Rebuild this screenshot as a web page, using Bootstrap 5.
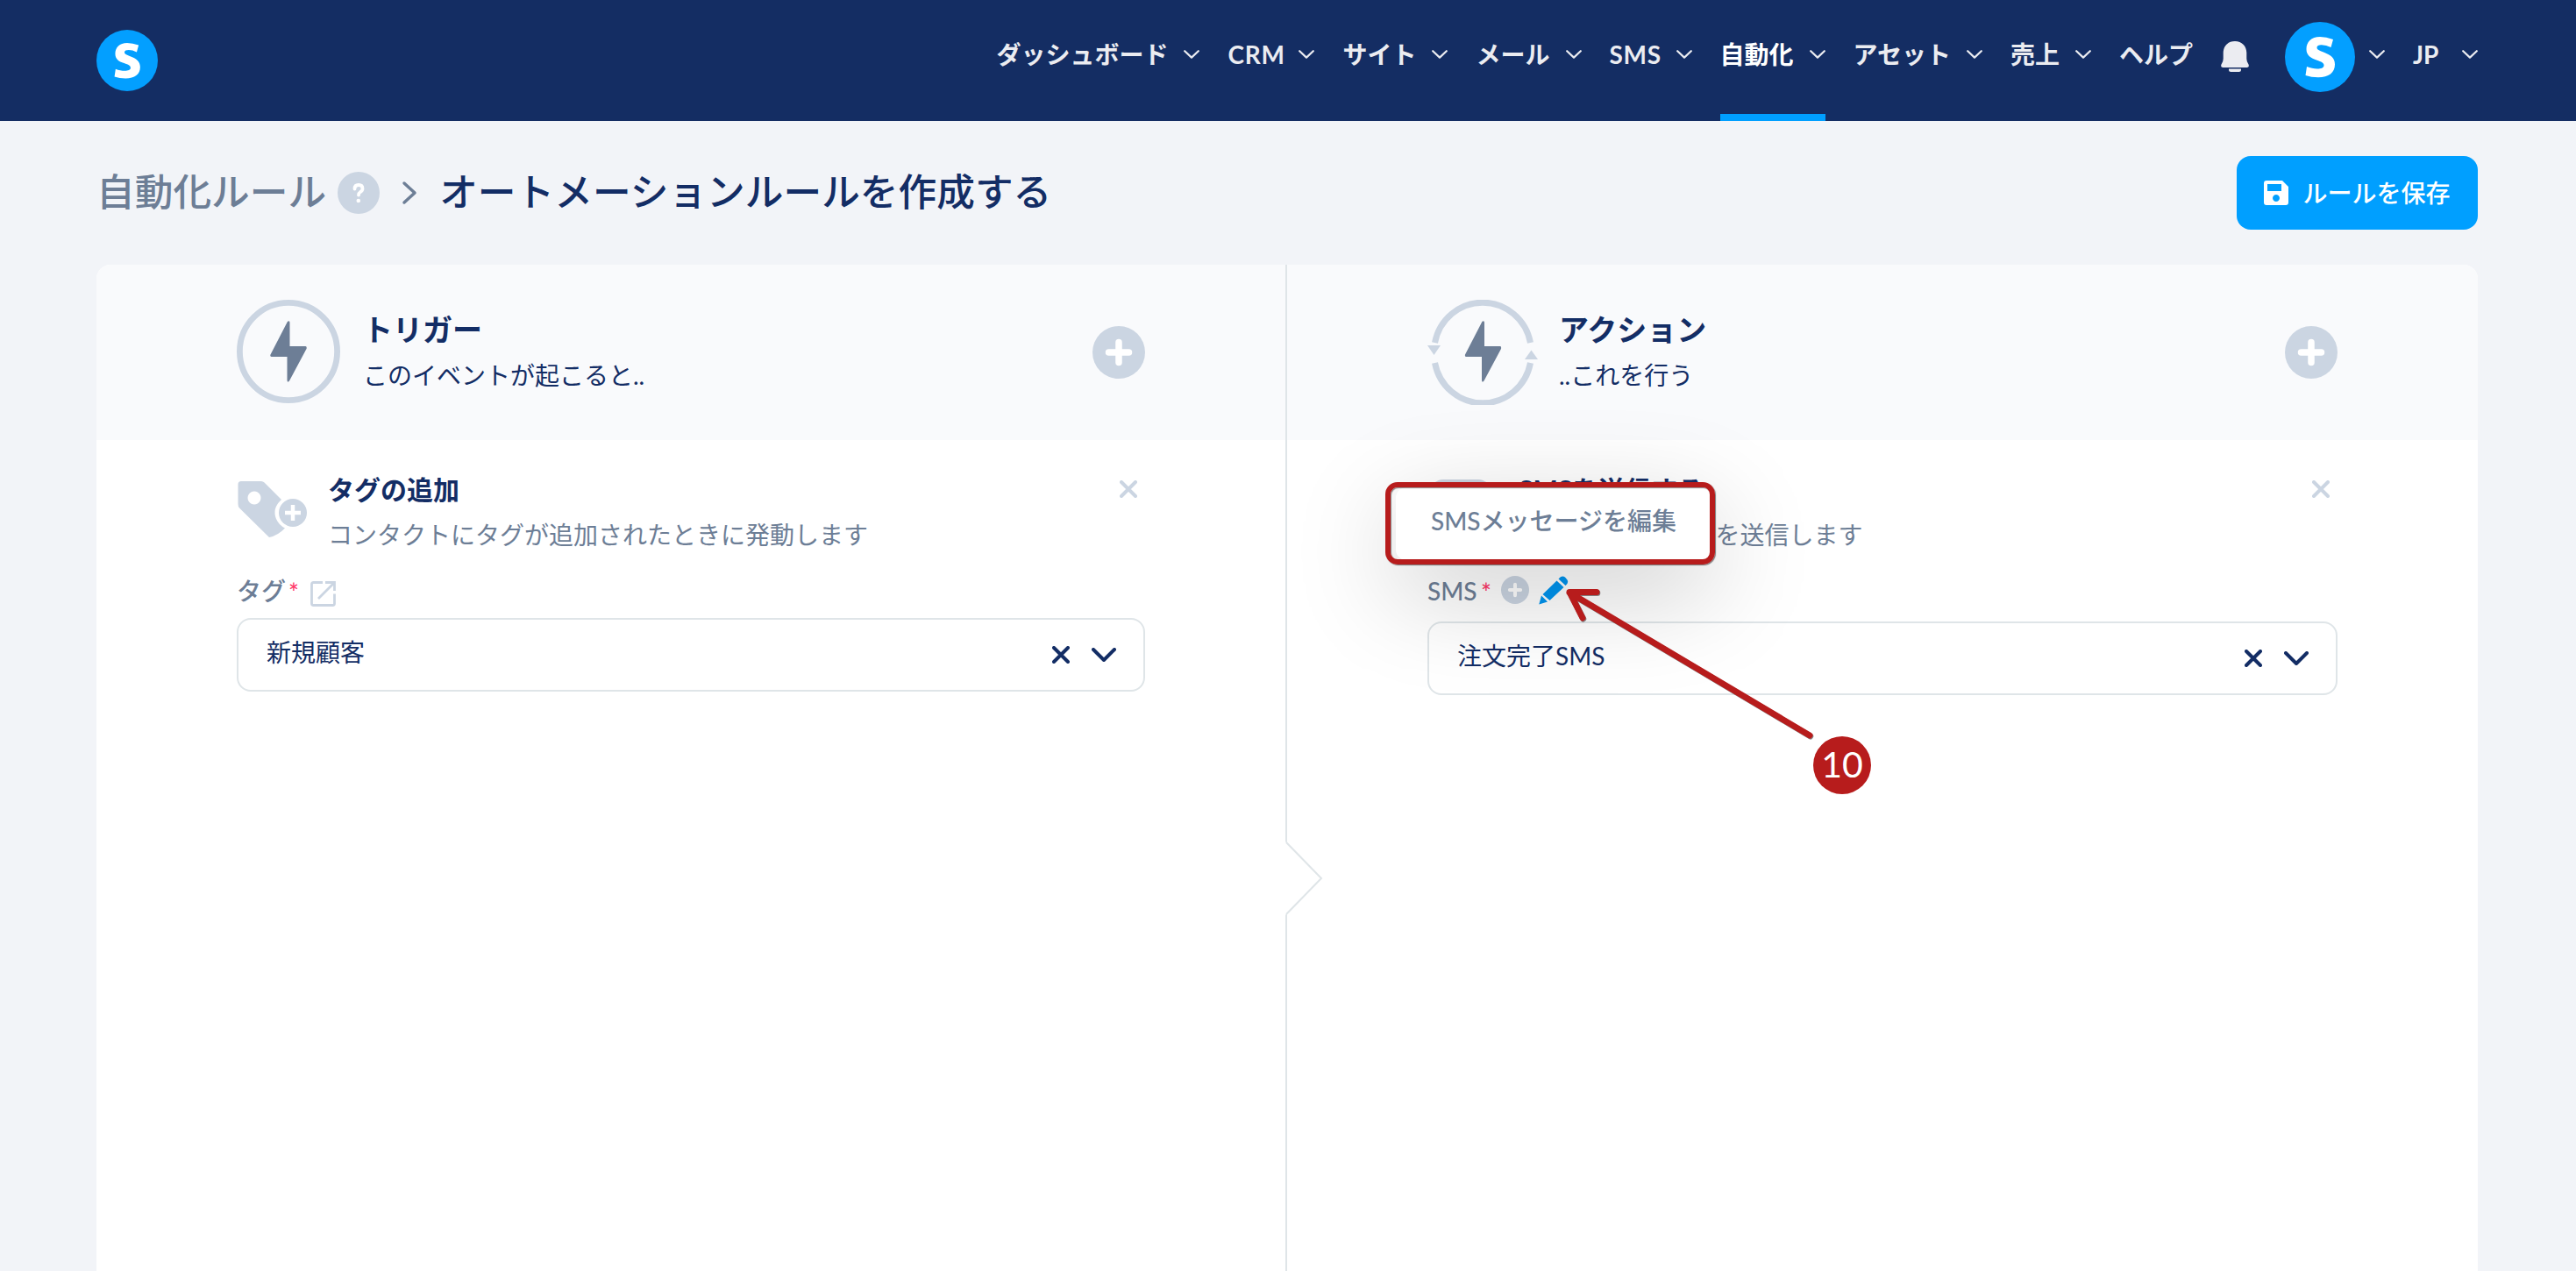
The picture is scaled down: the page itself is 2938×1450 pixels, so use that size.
<!DOCTYPE html>
<html lang="ja">
<head>
<meta charset="utf-8">
<title>オートメーションルールを作成する</title>
<link href="https://cdn.jsdelivr.net/npm/bootstrap@5.3.0/dist/css/bootstrap.min.css" rel="stylesheet">
<style>
body{background:#f2f4f8;color:#132d65;font-family:Lato,"Noto Sans CJK JP",sans-serif;font-size:28px;line-height:40px;height:1450px;overflow:hidden;position:relative}
svg{display:block;flex:none}
.topbar{background:#142d63;height:138px;padding:0 112px 0 110px}
.topbar .nav-link{padding:0 0 14px;color:#ebecf1;font-weight:700;height:138px;gap:18px;white-space:nowrap}
.topbar .nav-link.active{color:#fff;box-shadow:inset 0 -8px #009fff}
.menu{gap:32px}
.w-crm{width:63px;letter-spacing:.7px}
.w-sms{width:58px}
.topbar .w-sms{letter-spacing:.7px}
.w-jp{width:38px}
.avatar{margin:0 16px 8px 41px}
.ttl{font-size:43.700px;font-weight:500;line-height:64px;white-space:nowrap;padding-bottom:4px}
.slate{color:#6d7e96}
.headrow{padding:0 112px 0 110px;height:164px}
.help{margin-left:13px}
.crumb{margin:0 25px 0 25px}
.btn-save{background:#009fff;color:#fff;border:0;border-radius:16px;width:275px;height:84px;font-size:28px;font-weight:500;gap:16px;padding:0}
.board{margin:0 112px 0 110px;height:1148px;background:#fff;border-radius:16px 16px 0 0;overflow:hidden}
.pane{flex:0 0 1356px}
.pane-b{flex:1 1 0;border-left:2px solid #dfe5e8}
.pane-head{background:#f9fafc;height:200px;padding:0 160px}
.pane-ico{margin-bottom:2px}
.pane-body{padding:0 160px}
.pane-txt{padding:0 0 7px 26px}
.pane-b .pane-txt{padding-left:24px}
.h-a{font-size:34px;font-weight:700;line-height:40px;margin-bottom:18px}
.h-b{font-size:30px;font-weight:700;line-height:40px;margin:-2px 0 12px}
.rule-top{height:154px;padding-top:38px}
.rm{color:#cbd5e2;margin:8px 9px 0 0}
.lbl{height:49px;line-height:36px}
.pane-b .lbl{height:53px}
.ast{color:#ff3767;font-size:28px;line-height:38px;margin-left:3px}
.ext{margin:7px 0 0 13px}
.add-sms{margin:1px 0 0 11px}
.edit-sms{margin:1px 0 0 11px}
.sel{height:84px;border:2px solid #dfe5e8;border-radius:16px;padding:0 31px 0 32px}
.sel span{padding-bottom:6px}
.sel .clr{margin-right:25px}
.canvas-art{position:absolute;left:0;top:0;pointer-events:none}
.tip{position:absolute;left:1592px;top:556px;width:359px;height:83px;background:#fff;border-radius:12px;box-shadow:0 32px 120px rgba(0,0,0,.23);font-weight:500;padding:0 0 7px 40px;white-space:nowrap}
.hilite{position:absolute;left:1580px;top:550px;width:376px;height:94px;border:6px solid #b71c1c;border-radius:14px;box-shadow:1px 1px 1px rgba(0,0,0,.5),inset 1px 1px 1px rgba(0,0,0,.45)}
.step-no{position:absolute;left:2068px;top:840px;width:66px;height:66px;background:#b71c1c;color:#fff;font-size:41px;border-radius:50%;padding-bottom:2px}
</style>
<script src="https://cdn.jsdelivr.net/npm/bootstrap@5.3.0/dist/js/bootstrap.bundle.min.js"></script>
</head>
<body>
<svg width="0" height="0" class="position-absolute"><defs>
<symbol id="cv" viewBox="0 0 18 10"><path d="M1.200 1.200 9 8.600l7.800-7.400" fill="none" stroke="#ebecf1" stroke-width="2.200" stroke-linecap="round" stroke-linejoin="round"/></symbol>
<symbol id="cvb" viewBox="0 0 28 16"><path d="M2 2l12 12L26 2" fill="none" stroke="#132d65" stroke-width="4" stroke-linecap="round" stroke-linejoin="round"/></symbol>
<symbol id="xx" viewBox="0 0 20 20"><path d="M2 2l16 16M18 2L2 18" fill="none" stroke="currentColor" stroke-width="4" stroke-linecap="round"/></symbol>
<symbol id="plus" viewBox="0 0 60 60"><circle cx="30" cy="30" r="30" fill="#cbd5e2"/><path d="M30 18.500v23M18.500 30h23" stroke="#fff" stroke-width="7.500" stroke-linecap="round"/></symbol>
<symbol id="bolt" viewBox="0 0 42 70"><path d="M20 .8Q22.500-.8 22.500 2V29H40.500Q42.300 29.500 41.500 32L22 68.500Q20 71 19.500 68V41H1.500Q-.3 40.500.5 38.500Z" fill="#6d7e96"/></symbol>
<symbol id="brand" viewBox="0 0 80 80"><circle cx="40" cy="40" r="40" fill="#039fff"/><path d="M55 20Q47 17 40 17C30 17 24.500 23 24.500 31 24.500 38 29 41 36 43.500 42 45.500 44.500 47 44.500 49.500 44.500 52.500 41 53.500 37 53.500 33 53.500 29 52.500 25 51L23.500 61Q30 63.300 38 63.300C50 63.300 57 58 57 48.500 57 41 52 37.500 44 34.500 39 32.800 36.500 31.500 36.500 29.500 36.500 27 39 26.300 42 26.300Q47 26.300 52.500 29Z" fill="#fff"/></symbol>
</defs></svg>

<nav class="topbar d-flex align-items-center justify-content-between">
  <a href="#" aria-label="ホーム"><svg width="70" height="70"><use href="#brand"/></svg></a>
  <div class="d-flex align-items-center">
    <div class="menu nav d-flex flex-nowrap">
      <a class="nav-link d-flex align-items-center" href="#"><span>ダッシュボード</span><svg width="18" height="10"><use href="#cv"/></svg></a>
      <a class="nav-link d-flex align-items-center" href="#"><span class="w-crm">CRM</span><svg width="18" height="10"><use href="#cv"/></svg></a>
      <a class="nav-link d-flex align-items-center" href="#"><span>サイト</span><svg width="18" height="10"><use href="#cv"/></svg></a>
      <a class="nav-link d-flex align-items-center" href="#"><span>メール</span><svg width="18" height="10"><use href="#cv"/></svg></a>
      <a class="nav-link d-flex align-items-center" href="#"><span class="w-sms">SMS</span><svg width="18" height="10"><use href="#cv"/></svg></a>
      <a class="nav-link active d-flex align-items-center" href="#"><span>自動化</span><svg width="18" height="10"><use href="#cv"/></svg></a>
      <a class="nav-link d-flex align-items-center" href="#"><span>アセット</span><svg width="18" height="10"><use href="#cv"/></svg></a>
      <a class="nav-link d-flex align-items-center" href="#"><span>売上</span><svg width="18" height="10"><use href="#cv"/></svg></a>
      <a class="nav-link d-flex align-items-center" href="#">ヘルプ</a>
      <a class="nav-link d-flex align-items-center pb-2" href="#" aria-label="通知"><svg width="32" height="36" viewBox="0 0 32 36"><path d="M16 0C24 0 29 5.500 29.300 13V20Q29.300 22.500 31 25.500C32.800 28.500 31.500 30 29.500 30H2.500C.5 30-.8 28.500 1 25.500Q2.700 22.500 2.700 20V13C3 5.500 8 0 16 0ZM9 31.500h14v1q0 2.500-2.500 2.500h-9Q9 35 9 32.500Z" fill="#ebecf1"/></svg></a>
    </div>
    <a href="#" class="d-flex avatar" aria-label="アカウント"><svg width="80" height="80"><use href="#brand"/></svg></a>
    <div class="nav flex-nowrap menu">
      <a class="nav-link d-flex align-items-center" href="#" aria-label="メニュー"><svg width="18" height="10"><use href="#cv"/></svg></a>
      <a class="nav-link d-flex align-items-center" href="#"><span class="w-jp">JP</span><svg width="18" height="10"><use href="#cv"/></svg></a>
    </div>
  </div>
</nav>

<header class="headrow d-flex align-items-center justify-content-between">
  <div class="d-flex align-items-center">
    <span class="ttl slate">自動化ルール</span>
    <svg class="help" width="48" height="48" viewBox="0 0 48 48"><circle cx="24" cy="24" r="24" fill="#cbd5e2"/><path d="M19.500 19.500q0-4.500 4.500-4.500t4.500 4.200q0 2.300-2.500 3.800-2 1.300-2 3.500" fill="none" stroke="#fff" stroke-width="3.800" stroke-linecap="round"/><circle cx="23.800" cy="33" r="2.300" fill="#fff"/></svg>
    <svg class="crumb" width="18" height="28" viewBox="0 0 18 28"><path d="M3 3l12 11L3 25" fill="none" stroke="#6d7e96" stroke-width="3.500" stroke-linecap="round" stroke-linejoin="round"/></svg>
    <h1 class="ttl m-0">オートメーションルールを作成する</h1>
  </div>
  <button class="btn btn-save d-flex align-items-center justify-content-center"><svg width="28" height="28" viewBox="0 0 28 28"><path fill-rule="evenodd" d="M3 0H21L28 7V25q0 3-3 3H3q-3 0-3-3V3Q0 0 3 0ZM4 4V12H20V4ZM14 16a4 4 0 1 0 .01 0Z" fill="#fff"/></svg>ルールを保存</button>
</header>

<main class="board d-flex">
  <section class="pane">
    <div class="pane-head d-flex align-items-center">
      <svg class="pane-ico" width="118" height="118" viewBox="0 0 118 118"><circle cx="59" cy="59" r="55.600" fill="none" stroke="#cbd5e2" stroke-width="6.800"/><use href="#bolt" x="38" y="24" width="42" height="70"/></svg>
      <div class="flex-grow-1 pane-txt"><h2 class="h-a">トリガー</h2><div class="lh-1">このイベントが起こると..</div></div>
      <svg width="60" height="60"><use href="#plus"/></svg>
    </div>
    <div class="pane-body">
      <div class="rule-top d-flex">
        <svg class="mt-2" width="80" height="70" viewBox="0 0 80 70"><path fill-rule="evenodd" d="M5 1H28Q30 1 31.500 2.500L51 22Q40 32 45 44Q48 51 55 54.500Q47 63 37 65L3 31.500Q1.500 30 1.500 27V4.500Q1.500 1 5 1ZM20 12.500a7.500 7.500 0 1 0 .01 0Z" fill="#cbd5e2"/><circle cx="64" cy="37" r="16" fill="#cbd5e2"/><path d="M64 28v18M55 37h18" stroke="#fff" stroke-width="4.500"/></svg>
        <div class="flex-grow-1 ms-4"><h3 class="h-b">タグの追加</h3><div class="slate">コンタクトにタグが追加されたときに発動します</div></div>
        <svg class="rm" width="20" height="20"><use href="#xx"/></svg>
      </div>
      <label class="lbl d-flex slate fw-medium"><span>タグ</span><span class="ast">*</span>
        <svg class="ext" width="29" height="29" viewBox="0 0 29 29"><path d="M14 1.500H3.500Q1.500 1.500 1.500 3.500V25.500Q1.500 27.500 3.500 27.500H25.500Q27.500 27.500 27.500 25.500V14.500M17 1.500H27.500V11M27 2L9 20" fill="none" stroke="#cbd5e2" stroke-width="2.800"/></svg></label>
      <div class="sel d-flex align-items-center"><span class="flex-grow-1">新規顧客</span><svg class="clr" width="20" height="20"><use href="#xx"/></svg><svg width="28" height="16"><use href="#cvb"/></svg></div>
    </div>
  </section>
  <section class="pane-b">
    <div class="pane-head d-flex align-items-center">
      <svg width="126" height="120" viewBox="0 0 126 120"><path d="M8.500 49A55.500 56.500 0 0 1 117.500 49M117.500 72A55.500 56.500 0 0 1 8.500 72" fill="none" stroke="#cbd5e2" stroke-width="7"/><path d="M0 52H15L7.500 63ZM111 68H126L118.500 57.500Z" fill="#cbd5e2"/><use href="#bolt" x="42.500" y="24" width="42" height="70"/></svg>
      <div class="flex-grow-1 pane-txt"><h2 class="h-a">アクション</h2><div class="lh-1">..これを行う</div></div>
      <svg width="60" height="60"><use href="#plus"/></svg>
    </div>
    <div class="pane-body">
      <div class="rule-top d-flex">
        <svg width="80" height="70" viewBox="0 0 80 70"><rect x="4" y="7" width="68" height="56" rx="14" fill="#cbd5e2"/></svg>
        <div class="flex-grow-1 ms-4"><h3 class="h-b">SMSを送信する</h3><div class="slate">コンタクトにSMSを送信します</div></div>
        <svg class="rm" width="20" height="20"><use href="#xx"/></svg>
      </div>
      <div class="lbl d-flex slate fw-medium"><span class="w-sms">SMS</span><span class="ast">*</span>
        <svg class="add-sms" width="32" height="32"><use href="#plus"/></svg>
        <svg class="edit-sms" width="34" height="34" viewBox="0 0 34 34"><path d="M22.500 3.500Q26-1 30 1.500L32.500 4.500Q34.500 8 30.500 11ZM20.500 5.500L28.500 13L12.500 28L4.500 21ZM3 22.500L10 29.500L.3 32.500Z" fill="#0095f0"/></svg>
      </div>
      <div class="sel d-flex align-items-center"><span class="flex-grow-1">注文完了SMS</span><svg class="clr" width="20" height="20"><use href="#xx"/></svg><svg width="28" height="16"><use href="#cvb"/></svg></div>
    </div>
  </section>
</main>

<svg class="canvas-art" width="2938" height="1450" viewBox="0 0 2938 1450">
  <path d="M1464 960.500H1466.500L1507 1002L1466.500 1043.500H1464Z" fill="#fff"/><path d="M1467 961L1507 1002L1467 1043" fill="none" stroke="#dfe5e8" stroke-width="2"/>
</svg>
<div class="tip d-flex align-items-center slate">SMSメッセージを編集</div>
<div class="hilite"></div>
<svg class="canvas-art" width="2938" height="1450" viewBox="0 0 2938 1450">
  <path d="M2064 839L1790 676M1821 675.500L1790 675.500L1805 705" fill="none" stroke="rgba(0,0,0,.45)" stroke-width="7" stroke-linecap="round" stroke-linejoin="round" transform="translate(.8 1)"/>
  <path d="M2064 839L1790 676M1821 675.500L1790 675.500L1805 705" fill="none" stroke="#b71c1c" stroke-width="7" stroke-linecap="round" stroke-linejoin="round"/>
</svg>
<div class="step-no d-flex align-items-center justify-content-center">10</div>
</body>
</html>
